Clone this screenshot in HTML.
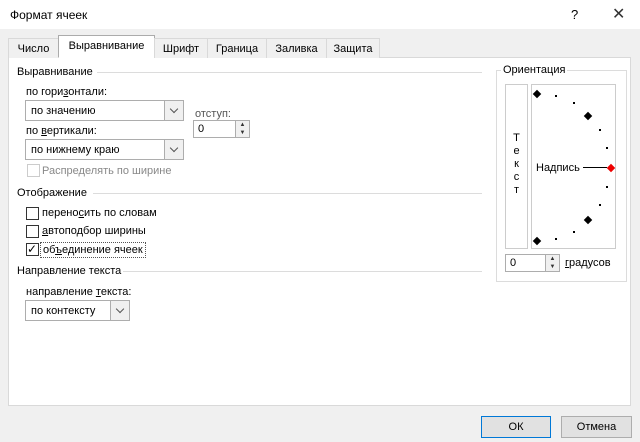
<html><head><style>
*{margin:0;padding:0;box-sizing:border-box}
body{width:640px;height:442px;background:#f0f0f0;font-family:"Liberation Sans",sans-serif;font-size:11px;color:#000;position:relative;overflow:hidden}
.a{position:absolute;white-space:nowrap}
.tab{position:absolute;top:38px;height:20px;border:1px solid #d9d9d9;border-bottom:none;background:#f0f0f0;padding-top:4px;text-align:center}
.sel{border:1px solid #ababab;background:#fff}
.dd{position:absolute;border:1px solid #adadad;background:#fff;height:21px;padding:4px 0 0 5px}
.dd b{position:absolute;right:0;top:0;width:19px;height:19px;border-left:1px solid #adadad;background:#f0f0f0}
.dd b:after{content:"";position:absolute;left:6px;top:5px;width:5px;height:5px;border-right:1px solid #555;border-bottom:1px solid #555;transform:rotate(45deg)}
.cb{position:absolute;width:13px;height:13px;border:1px solid #333;background:#fff}
.hr{position:absolute;height:1px;background:#dcdcdc}
.spin{position:absolute;border:1px solid #adadad;background:#fff;height:18px;padding:2px 0 0 4px}
.spin i{position:absolute;right:0;top:0;width:14px;height:16px;border-left:1px solid #adadad;background:#f0f0f0;font-style:normal;font-size:6px;line-height:8px;text-align:center;color:#333}
.dot{position:absolute;width:2px;height:2px;background:#000}
.dia{position:absolute;width:6px;height:6px;background:#000;transform:rotate(45deg)}
.btn{position:absolute;top:416px;height:22px;border:1px solid #adadad;background:#e1e1e1;text-align:center;padding-top:4px}
</style></head><body>
<div class="a" style="left:0;top:0;width:640px;height:29px;background:#fff"></div>
<div class="a" style="left:10px;top:8px;font-size:12px">Формат ячеек</div>
<div class="a" style="left:571px;top:7px;font-size:13px">?</div>
<div class="a" style="left:612px;top:4px;font-size:16px;color:#333">✕</div>
<div class="a" style="left:8px;top:57px;width:623px;height:349px;background:#fff;border:1px solid #d9d9d9"></div>
<div class="tab" style="left:8px;width:51px">Число</div>
<div class="tab sel" style="left:58px;top:35px;height:23px;width:97px;border-bottom:1px solid #fff">Выравнивание</div>
<div class="tab" style="left:154px;width:54px">Шрифт</div>
<div class="tab" style="left:207px;width:60px">Граница</div>
<div class="tab" style="left:266px;width:61px">Заливка</div>
<div class="tab" style="left:326px;width:54px">Защита</div>

<div class="a" style="left:17px;top:66px">Выравнивание</div>
<div class="hr" style="left:97px;top:72px;width:385px"></div>
<div class="a" style="left:26px;top:86px">по гори<u>з</u>онтали:</div>
<div class="dd" style="left:25px;top:100px;width:159px">по значению<b></b></div>
<div class="a" style="left:195px;top:108px;color:#555">отступ:</div>
<div class="spin" style="left:193px;top:120px;width:57px">0<i>▲<br>▼</i></div>
<div class="a" style="left:26px;top:125px">по <u>в</u>ертикали:</div>
<div class="dd" style="left:25px;top:139px;width:159px">по нижнему краю<b></b></div>
<div class="cb" style="left:27px;top:164px;border-color:#ccc"></div>
<div class="a" style="left:42px;top:165px;color:#888">Распределять по ширине</div>

<div class="a" style="left:17px;top:187px">Отображение</div>
<div class="hr" style="left:93px;top:193px;width:389px"></div>
<div class="cb" style="left:26px;top:207px"></div>
<div class="a" style="left:42px;top:207px">перено<u>с</u>ить по словам</div>
<div class="cb" style="left:26px;top:225px"></div>
<div class="a" style="left:42px;top:225px"><u>а</u>втоподбор ширины</div>
<div class="cb" style="left:26px;top:243px;font-size:12px;line-height:11px">✓</div>
<div class="a" style="left:40px;top:242px;border:1px dotted #555;padding:1px 2px">об<u>ъ</u>единение ячеек</div>

<div class="a" style="left:17px;top:265px">Направление текста</div>
<div class="hr" style="left:123px;top:271px;width:359px"></div>
<div class="a" style="left:26px;top:286px">направление <u>т</u>екста:</div>
<div class="dd" style="left:25px;top:300px;width:105px">по контексту<b></b></div>

<div class="a" style="left:496px;top:70px;width:131px;height:212px;border:1px solid #dcdcdc"></div>
<div class="a" style="left:501px;top:64px;background:#fff;padding:0 2px">Ориентация</div>
<div class="a" style="left:505px;top:84px;width:23px;height:165px;border:1px solid #ccc;text-align:center;line-height:13px;padding-top:47px">Т<br>е<br>к<br>с<br>т</div>
<div class="a" style="left:531px;top:84px;width:85px;height:165px;border:1px solid #ccc"></div>
<div class="dia" style="left:534px;top:91px"></div>
<div class="dot" style="left:555px;top:95px"></div>
<div class="dot" style="left:573px;top:102px"></div>
<div class="dia" style="left:585px;top:113px"></div>
<div class="dot" style="left:599px;top:129px"></div>
<div class="dot" style="left:606px;top:147px"></div>
<div class="a" style="left:536px;top:162px">Надпись</div>
<div class="a" style="left:583px;top:167px;width:24px;height:1px;background:#000"></div>
<div class="dia" style="left:608px;top:165px;background:#e00"></div>
<div class="dot" style="left:606px;top:186px"></div>
<div class="dot" style="left:599px;top:204px"></div>
<div class="dia" style="left:585px;top:217px"></div>
<div class="dot" style="left:573px;top:231px"></div>
<div class="dot" style="left:555px;top:238px"></div>
<div class="dia" style="left:534px;top:238px"></div>
<div class="spin" style="left:505px;top:254px;width:55px">0<i>▲<br>▼</i></div>
<div class="a" style="left:565px;top:257px"><u>г</u>радусов</div>

<div class="btn" style="left:481px;width:70px;border:1px solid #0078d7">ОК</div>
<div class="btn" style="left:561px;width:71px">Отмена</div>
</body></html>
